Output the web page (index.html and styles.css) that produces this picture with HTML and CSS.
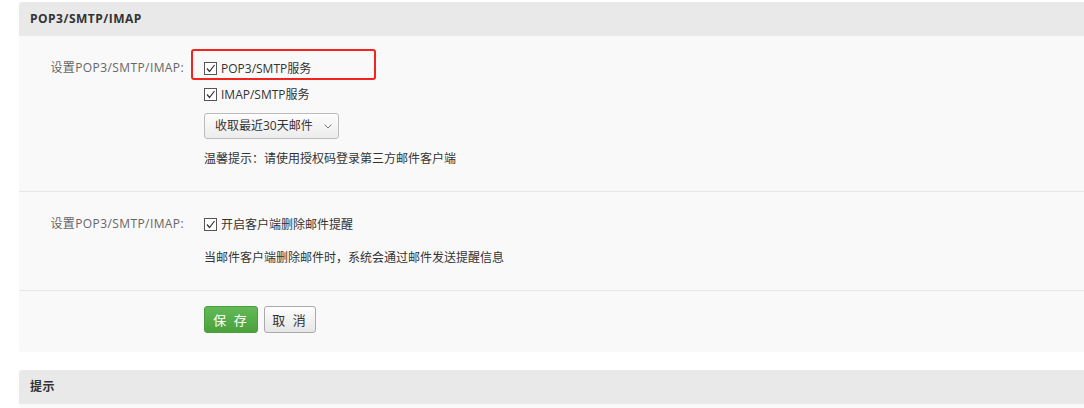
FILE: index.html
```html
<!DOCTYPE html>
<html lang="zh-CN">
<head>
  <meta charset="UTF-8">
  <title>POP3/SMTP/IMAP</title>
  <link rel="stylesheet" href="styles.css">
</head>
<body>
  <div class="panel">
    <div class="panel-hd">POP3/SMTP/IMAP</div>

    <div class="form-row first">
      <div class="form-label">设置POP3/SMTP/IMAP:</div>
      <div class="form-field">
        <label class="check highlight">
          <span class="box"><svg width="11" height="11" viewBox="0 0 11 11"><path d="M2 5.5 L4.5 8.5 L9.5 2" fill="none" stroke="#333" stroke-width="1.2"/></svg></span>
          POP3/SMTP服务
        </label>
        <label class="check">
          <span class="box"><svg width="11" height="11" viewBox="0 0 11 11"><path d="M2 5.5 L4.5 8.5 L9.5 2" fill="none" stroke="#333" stroke-width="1.2"/></svg></span>
          IMAP/SMTP服务
        </label>
        <div class="select">收取最近30天邮件 <svg width="8" height="5" viewBox="0 0 8 5"><path d="M0.5 0.5 L4 4 L7.5 0.5" fill="none" stroke="#777" stroke-width="1"/></svg></div>
        <p class="tip">温馨提示：请使用授权码登录第三方邮件客户端</p>
      </div>
    </div>

    <div class="form-row second">
      <div class="form-label">设置POP3/SMTP/IMAP:</div>
      <div class="form-field">
        <label class="check">
          <span class="box"><svg width="11" height="11" viewBox="0 0 11 11"><path d="M2 5.5 L4.5 8.5 L9.5 2" fill="none" stroke="#333" stroke-width="1.2"/></svg></span>
          开启客户端删除邮件提醒
        </label>
        <p class="tip">当邮件客户端删除邮件时，系统会通过邮件发送提醒信息</p>
      </div>
    </div>

    <div class="form-row actions">
      <div class="form-label"></div>
      <div class="form-field buttons">
        <button class="btn btn-save">保 存</button>
        <button class="btn btn-cancel">取 消</button>
      </div>
    </div>
  </div>

  <div class="panel panel-tips">
    <div class="panel-hd">提示</div>
  </div>
</body>
</html>
```

FILE: styles.css
```css
body {
  margin: 0;
  padding: 2px 0 0 19px;
  font-family: "Open Sans", "Noto Sans CJK SC", sans-serif;
  font-size: 12px;
  color: #333;
  background: #fff;
  overflow: hidden;
}
.panel {
  width: 1100px;
  background-color: #f9f9f9;
  border-radius: 3px 0 0 3px;
}
.panel-hd {
  height: 34px;
  line-height: 34px;
  padding-left: 11px;
  background-color: #e9e9e9;
  border-radius: 3px 0 0 0;
  font-weight: bold;
  letter-spacing: 0.5px;
  color: #333;
}
.form-row {
  display: flex;
  border-bottom: 1px solid #e6e6e6;
}
.form-row.first {
  padding: 19px 0 22px;
}
.form-row.second {
  padding: 19px 0 22px;
}
.form-row.actions {
  border-bottom: none;
  padding: 15px 0 19px;
}
.form-label {
  width: 165px;
  flex-shrink: 0;
  padding-right: 20px;
  text-align: right;
  line-height: 26px;
  letter-spacing: 0.4px;
  color: #666;
}
.form-field {
  display: flex;
  flex-direction: column;
  align-items: flex-start;
}
.check {
  position: relative;
  display: flex;
  align-items: center;
  gap: 4px;
  height: 26px;
  color: #333;
}
.box {
  width: 11px;
  height: 11px;
  border: 1px solid #555;
  background: #fff;
  display: flex;
}
.highlight::before {
  content: "";
  position: absolute;
  left: -13px;
  top: -6px;
  width: 181px;
  height: 27px;
  border: 2px solid #f2241d;
  border-radius: 3px;
}
.select {
  margin-top: 6px;
  width: 117px;
  height: 24px;
  line-height: 24px;
  padding: 0 6px 0 10px;
  border: 1px solid #bbb;
  border-radius: 3px;
  background: linear-gradient(#fdfdfd, #ececec);
  color: #333;
  display: flex;
  align-items: center;
  justify-content: space-between;
}
.tip {
  margin: 10px 0 0;
  line-height: 20px;
  color: #333;
}
.second .tip {
  margin-top: 11px;
}
.buttons {
  flex-direction: row;
  gap: 6px;
}
.btn {
  height: 27px;
  padding: 0;
  border-radius: 3px;
  font-family: inherit;
  font-size: 13px;
  letter-spacing: 2px;
  cursor: pointer;
}
.btn-save {
  width: 54px;
  color: #fff;
  border: 1px solid #4a9f3b;
  background: linear-gradient(#62b957, #4aa23c);
}
.btn-cancel {
  width: 52px;
  color: #333;
  border: 1px solid #aaa;
  background: linear-gradient(#fefefe, #e6e6e6);
}
.panel-tips {
  margin-top: 18px;
  height: 38px;
}
```
